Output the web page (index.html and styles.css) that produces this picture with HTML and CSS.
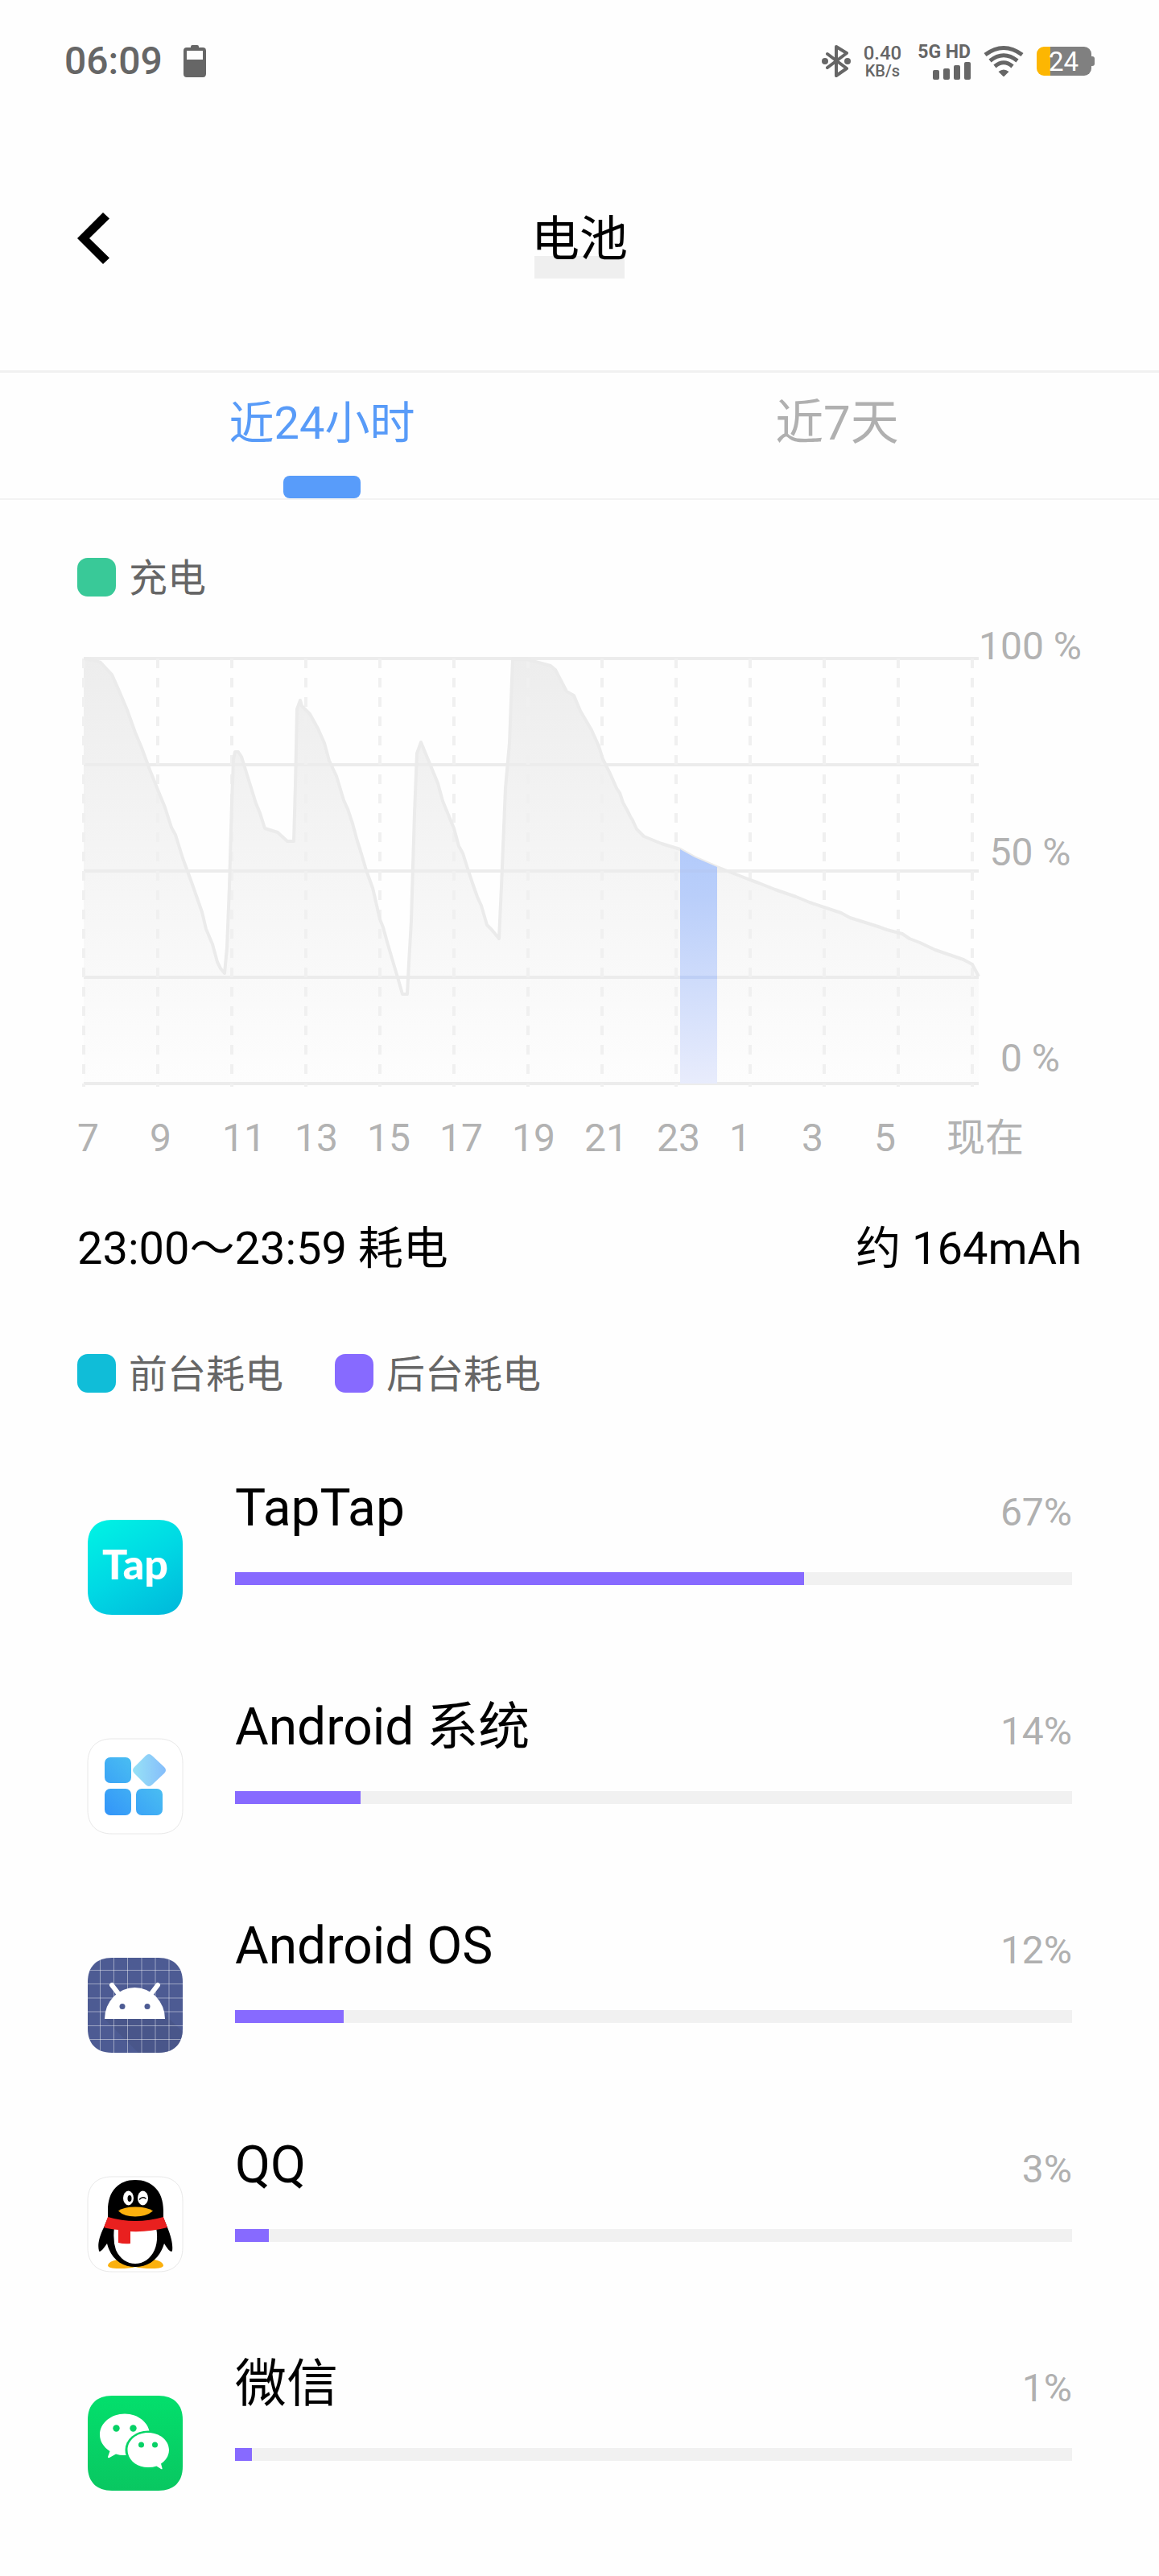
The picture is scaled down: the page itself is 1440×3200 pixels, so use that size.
FILE: index.html
```html
<!DOCTYPE html>
<html lang="zh-CN">
<head>
<meta charset="utf-8">
<meta name="viewport" content="width=device-width, initial-scale=1">
<title>电池</title>
<link rel="stylesheet" href="styles.css">
</head>
<body>
<div class="status">
  <div class="status-left">
    <span class="clock">06:09</span>
    <svg class="icon" width="28" height="40" viewBox="0 0 28 40" aria-hidden="true">
      <path fill="#666" fill-rule="evenodd" d="M9 2a2 2 0 0 1 2-2h6a2 2 0 0 1 2 2v1h5a4 4 0 0 1 4 4v29a4 4 0 0 1-4 4H4a4 4 0 0 1-4-4V7a4 4 0 0 1 4-4h5zM4 7v11h20V7z"/>
    </svg>
  </div>
  <div class="status-right">
    <svg class="icon" width="36" height="40" viewBox="0 0 36 40" aria-hidden="true">
      <path fill="none" stroke="#666" stroke-width="4" stroke-linecap="round" stroke-linejoin="round" d="M7 11 31 29 18 38V2L31 10 7 28"/>
      <circle cx="4" cy="20" r="4" fill="#666"/><circle cx="32" cy="20" r="4" fill="#666"/>
    </svg>
    <div class="speed"><span class="speed-value">0.40</span><span class="speed-unit">KB/s</span></div>
    <div class="signal">
      <span class="signal-label">5G HD</span>
      <svg class="icon" width="47" height="22" viewBox="0 0 47 22" fill="#666" aria-hidden="true">
        <rect y="10" width="8" height="12" rx="2"/><rect x="13" y="8" width="8" height="14" rx="2"/><rect x="26" y="4" width="8" height="18" rx="2"/><rect x="39" width="8" height="22" rx="2"/>
      </svg>
    </div>
    <svg class="icon" width="50" height="40" viewBox="0 0 50 40" aria-hidden="true">
      <g fill="none" stroke="#666" stroke-width="5">
        <path d="M2 12Q25-5 48 12"/><path d="M8 19.500Q25 6 42 19.500"/><path d="M14 26.500Q25 17 36 26.500"/>
      </g>
      <path fill="#666" d="M18.500 33Q25 28 31.500 33L26 38.500Q25 39.500 24 38.500z"/>
    </svg>
    <div class="battery">24</div>
  </div>
</div>

<header class="header">
  <button class="back" type="button" aria-label="返回">
    <svg class="icon" width="40" height="64" viewBox="0 0 40 64" aria-hidden="true"><path d="M32 0 40 7.500 15 32 40 56.500 32 64 0 32z"/></svg>
  </button>
  <h1 class="title">电池</h1>
</header>

<nav class="tabs">
  <button class="tab tab-active" type="button">近24小时</button>
  <button class="tab" type="button">近7天</button>
</nav>

<main>
  <section class="content">
    <div class="legend"><span class="key"><i class="swatch green"></i>充电</span></div>

    <div class="chart">
      <svg class="plot" viewBox="0 0 1112 534" role="img" aria-label="近24小时电量">
        <defs>
          <linearGradient id="level" x1="0" y1="0" x2="0" y2="1"><stop offset="0" stop-color="#ededed"/><stop offset="1" stop-color="#fdfdfd"/></linearGradient>
          <linearGradient id="picked" x1="0" y1="0" x2="0" y2="1"><stop offset="0" stop-color="#b3cbfb"/><stop offset=".2" stop-color="#b9cefa"/><stop offset="1" stop-color="#e8ecfc"/></linearGradient>
        </defs>
        <path fill="url(#level)" d="M0 530V2L12 4 21 7 35 22 43 40 54 66 64 94 72 113 82 140 92 165 101 187 109 212 114 221 123 250 134 280 147 317 152 338 160 357 166 379 170 387 175 393 178 361 181 285 184 181 186 127 188 118H192L196 124 214 182 219 194 225 213 241 218 253 229H261L263 159 265 65 269 54 271 61 281 71 291 89 299 107 305 129 314 148 323 178 328 189 334 207 340 229 343 238 351 265 359 287 368 326 372 336 377 354 384 378 390 398 396 419H402L404 380 407 328 411 194 414 120 419 106 440 157 446 179 460 213 466 235 471 244 477 263 483 281 489 298 494 309 501 333 507 339 516 350 519 285 524 163 529 107 533 3H550L580 11 586 16 600 43 609 48 617 67 631 91 640 111 645 127 654 145 662 163 666 169 670 181 675 190 679 198 682 203 687 214 696 223 718 232 741 239 759 249 787 261 828 277 839 281 859 289 885 298 902 305 941 318 952 324 987 335 998 339 1017 344 1026 350 1039 355 1058 364 1093 376 1104 382 1112 397V530z"/>
        <path fill="none" stroke="#ececec" stroke-width="4" d="M0 2H1112M0 134H1112M0 266H1112M0 398H1112M0 530H1112"/>
        <path fill="none" stroke="#f0f0f0" stroke-width="4" stroke-dasharray="12 12" d="M0 2V534M92 2V534M184 2V534M276 2V534M368 2V534M460 2V534M552 2V534M644 2V534M736 2V534M828 2V534M920 2V534M1012 2V534M1104 2V534"/>
        <path fill="none" stroke="#ebebeb" stroke-width="4" stroke-linejoin="round" d="M0 2L12 4 21 7 35 22 43 40 54 66 64 94 72 113 82 140 92 165 101 187 109 212 114 221 123 250 134 280 147 317 152 338 160 357 166 379 170 387 175 393 178 361 181 285 184 181 186 127 188 118H192L196 124 214 182 219 194 225 213 241 218 253 229H261L263 159 265 65 269 54 271 61 281 71 291 89 299 107 305 129 314 148 323 178 328 189 334 207 340 229 343 238 351 265 359 287 368 326 372 336 377 354 384 378 390 398 396 419H402L404 380 407 328 411 194 414 120 419 106 440 157 446 179 460 213 466 235 471 244 477 263 483 281 489 298 494 309 501 333 507 339 516 350 519 285 524 163 529 107 533 3H550L580 11 586 16 600 43 609 48 617 67 631 91 640 111 645 127 654 145 662 163 666 169 670 181 675 190 679 198 682 203 687 214 696 223 718 232 741 239 759 249 787 261 828 277 839 281 859 289 885 298 902 305 941 318 952 324 987 335 998 339 1017 344 1026 350 1039 355 1058 364 1093 376 1104 382 1112 397"/>
        <path fill="url(#picked)" d="M741 239 759 249 787 261V530H741z"/>
        <path stroke="#b4c6f2" stroke-opacity=".6" stroke-width="4" d="M741 266H787M741 398H787"/>
      </svg>
      <div class="y-axis"><span>100 %</span><span>50 %</span><span>0 %</span></div>
    </div>
    <div class="x-axis"><span>7</span><span>9</span><span>11</span><span>13</span><span>15</span><span>17</span><span>19</span><span>21</span><span>23</span><span>1</span><span>3</span><span>5</span><span>现在</span></div>

    <div class="summary"><span>23:00～23:59 耗电</span><span>约 164mAh</span></div>
    <div class="legend">
      <span class="key"><i class="swatch teal"></i>前台耗电</span>
      <span class="key"><i class="swatch violet"></i>后台耗电</span>
    </div>
  </section>

  <ul class="apps">
    <li class="app">
      <svg class="app-icon" viewBox="0 0 120 120" aria-hidden="true">
        <defs><linearGradient id="tap" x1=".2" y1="0" x2=".8" y2="1"><stop offset="0" stop-color="#00f0e4"/><stop offset=".5" stop-color="#00d8e4"/><stop offset="1" stop-color="#00bcdc"/></linearGradient></defs>
        <path fill="url(#tap)" d="M31 1H89C108 1 119 12 119 31V89C119 108 108 119 89 119H31C12 119 1 108 1 89V31C1 12 12 1 31 1z"/>
        <text class="tap-word" x="60" y="75" text-anchor="middle">Tap</text>
      </svg>
      <div class="usage">
        <div class="usage-head"><span class="name">TapTap</span><span class="percent">67%</span></div>
        <div class="track"><div class="fill" style="width:68%"></div></div>
      </div>
    </li>
    <li class="app">
      <svg class="app-icon" viewBox="0 0 120 120" aria-hidden="true">
        <defs>
          <linearGradient id="tiles" gradientUnits="userSpaceOnUse" x1="22" y1="96" x2="80" y2="38"><stop offset="0" stop-color="#3294f9"/><stop offset="1" stop-color="#4cc2f1"/></linearGradient>
          <linearGradient id="gem" gradientUnits="userSpaceOnUse" x1="57" y1="40" x2="98" y2="40"><stop offset="0" stop-color="#97e2f6"/><stop offset="1" stop-color="#85bdfb"/></linearGradient>
        </defs>
        <path fill="#fff" stroke="#e8e8e8" d="M31 1H89C108 1 119 12 119 31V89C119 108 108 119 89 119H31C12 119 1 108 1 89V31C1 12 12 1 31 1z"/>
        <g fill="url(#tiles)"><path d="M29 24H48a7 7 0 0 1 7 7V49a7 7 0 0 1-7 7H29a7 7 0 0 1-7-7V31a7 7 0 0 1 7-7zM29 63H48a7 7 0 0 1 7 7V89a7 7 0 0 1-7 7H29a7 7 0 0 1-7-7V70a7 7 0 0 1 7-7zM68 63H87a7 7 0 0 1 7 7V89a7 7 0 0 1-7 7H68a7 7 0 0 1-7-7V70a7 7 0 0 1 7-7z"/></g>
        <path fill="url(#gem)" d="M73 22Q77 18 81 22L96 36Q100 40 96 44L81 58Q77 62 73 58L59 44Q55 40 59 36z"/>
      </svg>
      <div class="usage">
        <div class="usage-head"><span class="name">Android 系统</span><span class="percent">14%</span></div>
        <div class="track"><div class="fill" style="width:15%"></div></div>
      </div>
    </li>
    <li class="app">
      <svg class="app-icon" viewBox="0 0 120 120" aria-hidden="true">
        <defs><clipPath id="tile"><path d="M31 1H89C108 1 119 12 119 31V89C119 108 108 119 89 119H31C12 119 1 108 1 89V31C1 12 12 1 31 1z"/></clipPath></defs>
        <g clip-path="url(#tile)">
          <path fill="#4d5b93" d="M0 0H120V120H0z"/>
          <path fill="#475384" d="M22 77 65 120H120V94L97 72z" opacity=".6"/>
          <path stroke="#fff" stroke-opacity=".45" d="M16.500 0V120M33.500 0V120M50.500 0V120M68 0V120M85 0V120M102 0V120M0 16.500H120M0 33.500H120M0 51H120M0 68H120M0 85.500H120M0 102.500H120"/>
          <path stroke="#fff" stroke-width="6" stroke-linecap="round" d="M31 35 41 48M88 35 78 48"/>
          <path fill="#fff" d="M22 77A37.500 39 0 0 1 97 77z"/>
          <circle cx="44" cy="61.500" r="3.500" fill="#4d5b93"/><circle cx="75" cy="61.500" r="3.500" fill="#4d5b93"/>
        </g>
      </svg>
      <div class="usage">
        <div class="usage-head"><span class="name">Android OS</span><span class="percent">12%</span></div>
        <div class="track"><div class="fill" style="width:13%"></div></div>
      </div>
    </li>
    <li class="app">
      <svg class="app-icon" viewBox="0 0 120 120" aria-hidden="true">
        <path fill="#fff" stroke="#e8e8e8" d="M31 1H89C108 1 119 12 119 31V89C119 108 108 119 89 119H31C12 119 1 108 1 89V31C1 12 12 1 31 1z"/>
        <path fill="#fbb00d" d="M38 104Q27 106 26 111Q26 115 40 115Q54 115 60 113Q67 115 81 115Q95 115 95 111Q94 106 84 104z"/>
        <path d="M60 5C40 5 26 18 26 43V52L21 64C15 76 13 86 15 93Q16 97 25 84C30 104 44 113 60 113S90 104 96 84Q104 97 106 93C107 86 105 76 100 64L95 52V43C95 18 80 5 60 5z"/>
        <path fill="#fff" d="M34 64Q60 72 86 64Q89 80 84 92C79 103 70 109 60 109S41 103 36 92Q32 80 34 64z"/>
        <path fill="#e9201f" d="M26 51Q60 61 95 51L100 64Q78 70 54 69V84Q46 85 39 83V67Q28 66 21 64z"/>
        <ellipse cx="51.500" cy="27.500" rx="6.500" ry="9" fill="#fff"/><ellipse cx="69.500" cy="27.500" rx="6.500" ry="9" fill="#fff"/>
        <ellipse cx="53" cy="28" rx="2.500" ry="4"/>
        <path fill="none" stroke="#000" stroke-width="1.500" stroke-linecap="round" d="M65.500 29Q69 25 73 28"/>
        <path fill="#fbb00d" d="M39 43.500Q46 38.500 60 38.500T82 43.500Q74 50.500 60 50.500T39 43.500z"/>
      </svg>
      <div class="usage">
        <div class="usage-head"><span class="name">QQ</span><span class="percent">3%</span></div>
        <div class="track"><div class="fill" style="width:4%"></div></div>
      </div>
    </li>
    <li class="app">
      <svg class="app-icon" viewBox="0 0 120 120" aria-hidden="true">
        <defs><linearGradient id="chat" x1="0" y1="0" x2="0" y2="1"><stop offset="0" stop-color="#03df6c"/><stop offset="1" stop-color="#09c761"/></linearGradient></defs>
        <path fill="url(#chat)" d="M31 1H89C108 1 119 12 119 31V89C119 108 108 119 89 119H31C12 119 1 108 1 89V31C1 12 12 1 31 1z"/>
        <path fill="#fff" d="M47 23.500C30 23.500 16 35 16 49.500C16 58 21 65 28.500 70L26 77Q26 79 28 78L36 73.500Q42 75.500 49 75C60 74 78 64 78 49.500C78 35 64 23.500 47 23.500z"/>
        <ellipse cx="76" cy="68.500" rx="28.500" ry="24" fill="#05d466"/>
        <path fill="#fff" d="M76 47C61.500 47 50.500 56.500 50.500 68.500S61.500 90 76 90Q82 90 86.500 88.500L92 92Q94 93 93.500 91L92 85.500C98 81.500 102 75.500 102 68.500C102 56.500 90.500 47 76 47z"/>
        <g fill="#06d165"><circle cx="36.500" cy="41.500" r="4.200"/><circle cx="57.500" cy="41.500" r="4.200"/><circle cx="67.500" cy="62" r="3.500"/><circle cx="84.500" cy="62" r="3.500"/></g>
      </svg>
      <div class="usage">
        <div class="usage-head"><span class="name">微信</span><span class="percent">1%</span></div>
        <div class="track"><div class="fill" style="width:2%"></div></div>
      </div>
    </li>
  </ul>
</main>
</body>
</html>
```
FILE: styles.css
```css
* { box-sizing: border-box; }
body {
  margin: 0;
  background: #fefefe;
  color: #000;
  font-family: Roboto, "Noto Sans CJK SC", sans-serif;
  font-size: 48px;
}
button {
  border: 0;
  padding: 0;
  background: none;
  color: inherit;
  font: inherit;
  cursor: pointer;
}
.icon { display: block; flex: none; }

.status {
  display: flex;
  justify-content: space-between;
  align-items: center;
  height: 108px;
  padding: 44px 80px 0;
  color: #666;
}
.status-left, .status-right { display: flex; align-items: center; }
.status-left { gap: 26px; }
.status-right { gap: 16px; }
.clock { font-weight: 500; line-height: 64px; }
.speed, .signal { display: flex; flex-direction: column; font-weight: 500; }
.speed { align-items: center; margin-right: 4px; }
.speed-value { font-size: 24px; line-height: 24px; }
.speed-unit { font-size: 20px; line-height: 20px; }
.signal { align-items: flex-end; }
.signal-label { font-size: 23px; line-height: 24px; font-weight: 700; }
.battery {
  position: relative;
  width: 68px;
  height: 36px;
  margin-right: 4px;
  padding-left: 15px;
  border-radius: 9px;
  background: linear-gradient(90deg, #fdb602 17px, #808080 17px);
  color: #fff;
  font-size: 33px;
  line-height: 38px;
}
.battery::after {
  content: "";
  position: absolute;
  left: 100%;
  top: 12px;
  width: 4px;
  height: 12px;
  border-radius: 0 3px 3px 0;
  background: #808080;
}

.header {
  display: grid;
  grid-template-columns: 1fr auto 1fr;
  align-items: center;
  padding: 138px 96px 114px;
}
.back { justify-self: start; }
.title {
  margin: 0;
  padding-top: 4px;
  background: linear-gradient(#efefef, #efefef) center bottom / 112px 28px no-repeat;
  font-size: 60px;
  font-weight: 400;
  line-height: 96px;
}

.tabs {
  display: flex;
  padding: 0 80px;
  border-top: 3px solid #f1f1f1;
  border-bottom: 2px solid #f3f3f3;
}
.tab {
  display: flex;
  flex: 1;
  flex-direction: column;
  align-items: center;
  color: #b0b0b0;
  font-size: 60px;
  line-height: 126px;
}
.tab::after { content: ""; width: 96px; height: 28px; margin-top: 2px; border-radius: 8px; }
.tab-active { color: #589bf8; font-size: 56px; }
.tab-active::after { background: #589cfa; }

.content { padding: 72px 96px 0; }
.legend { display: flex; gap: 64px; height: 48px; color: #666; line-height: 52px; }
.key { display: flex; gap: 16px; }
.swatch { width: 48px; height: 48px; border-radius: 13px; }
.green { background: #39c998; }
.teal { background: #10bdd8; }
.violet { background: #876aff; }

.chart { display: flex; margin-top: 30px; }
.plot { flex: 1; min-width: 0; margin: 45px 0 0 8px; overflow: visible; }
.y-axis {
  display: flex;
  flex-direction: column;
  justify-content: space-between;
  flex: none;
  width: 128px;
  padding-bottom: 3px;
  color: #b2b2b2;
  line-height: 64px;
  text-align: center;
  white-space: nowrap;
}
.x-axis {
  display: flex;
  margin-top: 32px;
  padding-right: 78px;
  color: #b2b2b2;
  line-height: 64px;
  white-space: nowrap;
}
.x-axis span { flex: 1; min-width: 0; }
.summary {
  display: flex;
  justify-content: space-between;
  margin: 73px 0 99px;
  font-size: 56px;
  line-height: 64px;
}

.apps {
  display: flex;
  flex-direction: column;
  gap: 99px;
  margin: 0;
  padding: 104px 108px;
  list-style: none;
}
.app { display: flex; gap: 64px; }
.app-icon { flex: none; width: 120px; height: 120px; margin-top: 53px; }
.tap-word { fill: #fff; font-family: Lato, sans-serif; font-size: 52px; font-weight: 900; }
.usage { flex: 1; min-width: 0; }
.usage-head { display: flex; justify-content: space-between; align-items: baseline; height: 80px; line-height: 80px; }
.name { font-size: 64px; }
.percent { color: #b0b0b0; }
.track { height: 16px; margin-top: 39px; background: #f1f1f1; }
.fill { height: 100%; background: #876aff; }
```
